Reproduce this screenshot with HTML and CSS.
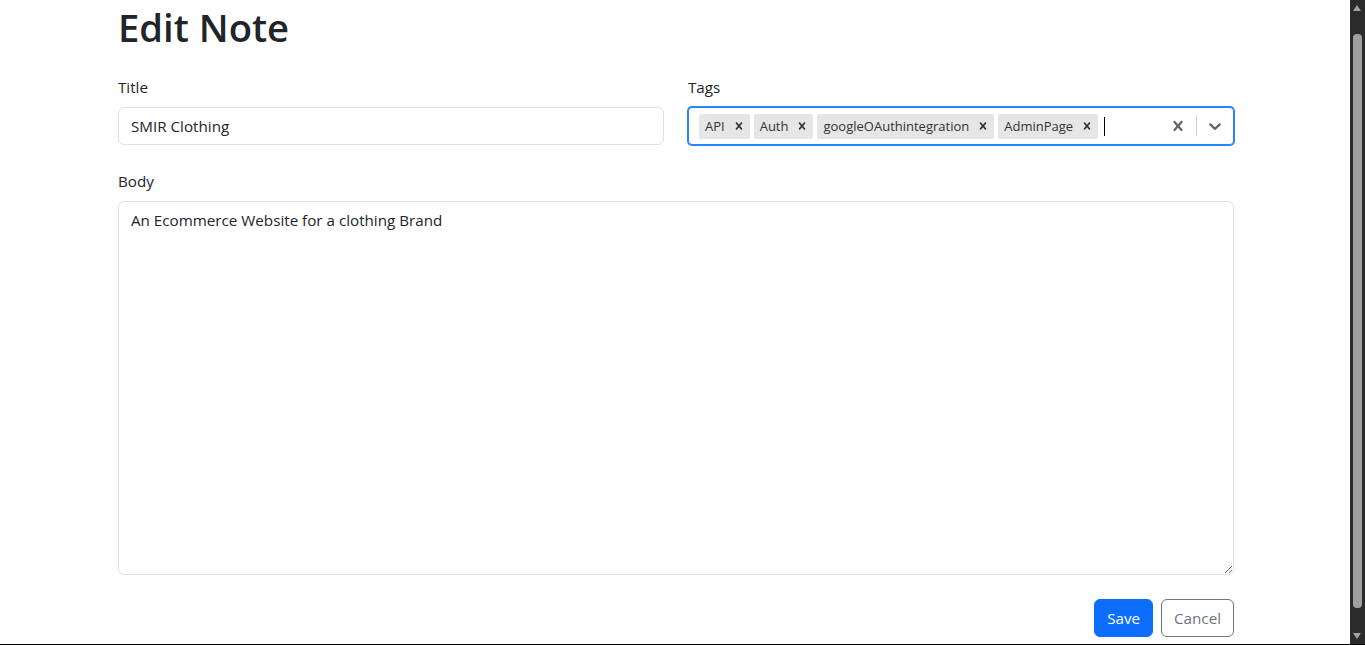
FILE: index.html
```html
<!DOCTYPE html>
<html lang="en">
<head>
<meta charset="utf-8">
<title>Edit Note</title>
<link rel="stylesheet" href="styles.css">
</head>
<body>
<div class="page">
  <div class="container">
    <h1 class="heading">Edit Note</h1>
    <form class="form">
      <div class="row">
        <div class="col">
          <label class="form-label">Title</label>
          <input class="form-control" type="text" value="SMIR Clothing">
        </div>
        <div class="col">
          <label class="form-label">Tags</label>
          <div class="select-control">
            <div class="value-container">
              <div class="chip"><span class="chip-label">API</span><span class="chip-remove"><svg viewBox="0 0 20 20" width="14" height="14"><path d="M14.348 14.849c-0.469 0.469-1.229 0.469-1.697 0l-2.651-3.030-2.651 3.029c-0.469 0.469-1.229 0.469-1.697 0-0.469-0.469-0.469-1.229 0-1.697l2.758-3.15-2.759-3.152c-0.469-0.469-0.469-1.228 0-1.697s1.228-0.469 1.697 0l2.652 3.031 2.651-3.031c0.469-0.469 1.228-0.469 1.697 0s0.469 1.229 0 1.697l-2.758 3.152 2.758 3.15c0.469 0.469 0.469 1.229 0 1.698z"/></svg></span></div>
              <div class="chip"><span class="chip-label">Auth</span><span class="chip-remove"><svg viewBox="0 0 20 20" width="14" height="14"><path d="M14.348 14.849c-0.469 0.469-1.229 0.469-1.697 0l-2.651-3.030-2.651 3.029c-0.469 0.469-1.229 0.469-1.697 0-0.469-0.469-0.469-1.229 0-1.697l2.758-3.15-2.759-3.152c-0.469-0.469-0.469-1.228 0-1.697s1.228-0.469 1.697 0l2.652 3.031 2.651-3.031c0.469-0.469 1.228-0.469 1.697 0s0.469 1.229 0 1.697l-2.758 3.152 2.758 3.15c0.469 0.469 0.469 1.229 0 1.698z"/></svg></span></div>
              <div class="chip"><span class="chip-label">googleOAuthintegration</span><span class="chip-remove"><svg viewBox="0 0 20 20" width="14" height="14"><path d="M14.348 14.849c-0.469 0.469-1.229 0.469-1.697 0l-2.651-3.030-2.651 3.029c-0.469 0.469-1.229 0.469-1.697 0-0.469-0.469-0.469-1.229 0-1.697l2.758-3.15-2.759-3.152c-0.469-0.469-0.469-1.228 0-1.697s1.228-0.469 1.697 0l2.652 3.031 2.651-3.031c0.469-0.469 1.228-0.469 1.697 0s0.469 1.229 0 1.697l-2.758 3.152 2.758 3.150c0.469 0.469 0.469 1.229 0 1.698z"/></svg></span></div>
              <div class="chip"><span class="chip-label">AdminPage</span><span class="chip-remove"><svg viewBox="0 0 20 20" width="14" height="14"><path d="M14.348 14.849c-0.469 0.469-1.229 0.469-1.697 0l-2.651-3.030-2.651 3.029c-0.469 0.469-1.229 0.469-1.697 0-0.469-0.469-0.469-1.229 0-1.697l2.758-3.15-2.759-3.152c-0.469-0.469-0.469-1.228 0-1.697s1.228-0.469 1.697 0l2.652 3.031 2.651-3.031c0.469-0.469 1.228-0.469 1.697 0s0.469 1.229 0 1.697l-2.758 3.152 2.758 3.15c0.469 0.469 0.469 1.229 0 1.698z"/></svg></span></div>
              <div class="caret"></div>
            </div>
            <div class="indicators">
              <div class="indicator"><svg viewBox="0 0 20 20" width="20" height="20"><path d="M14.348 14.849c-0.469 0.469-1.229 0.469-1.697 0l-2.651-3.030-2.651 3.029c-0.469 0.469-1.229 0.469-1.697 0-0.469-0.469-0.469-1.229 0-1.697l2.758-3.15-2.759-3.152c-0.469-0.469-0.469-1.228 0-1.697s1.228-0.469 1.697 0l2.652 3.031 2.651-3.031c0.469-0.469 1.228-0.469 1.697 0s0.469 1.229 0 1.697l-2.758 3.152 2.758 3.15c0.469 0.469 0.469 1.229 0 1.698z"/></svg></div>
              <span class="separator"></span>
              <div class="indicator"><svg viewBox="0 0 20 20" width="20" height="20"><path d="M4.516 7.548c0.436-0.446 1.043-0.481 1.576 0l3.908 3.747 3.908-3.747c0.533-0.481 1.141-0.446 1.574 0 0.436 0.445 0.408 1.197 0 1.615-0.406 0.418-4.695 4.502-4.695 4.502-0.217 0.223-0.502 0.335-0.787 0.335s-0.57-0.112-0.789-0.335c0 0-4.287-4.084-4.695-4.502s-0.436-1.17 0-1.615z"/></svg></div>
            </div>
          </div>
        </div>
      </div>
      <div class="field">
        <label class="form-label">Body</label>
        <textarea class="form-control textarea" rows="15">An Ecommerce Website for a clothing Brand</textarea>
      </div>
      <div class="actions">
        <button type="button" class="btn btn-primary">Save</button>
        <button type="button" class="btn btn-outline">Cancel</button>
      </div>
    </form>
  </div>
</div>
<div class="scrollbar">
  <div class="sb-arrow sb-up"></div>
  <div class="sb-thumb"></div>
  <div class="sb-arrow sb-down"></div>
</div>
<div class="bottom-line"></div>
</body>
</html>
```

FILE: styles.css
```css
* { box-sizing: border-box; }

html, body {
  margin: 0;
  padding: 0;
  background: #fff;
  overflow: hidden;
}

body {
  font-family: "Segoe UI", "Open Sans", "Noto Sans", sans-serif;
  font-size: 15.2px;
  line-height: 24px;
  color: #212529;
}

.page {
  margin-right: 15px;
  padding-left: 2px;
}

.container {
  width: 1116px;
  margin: 0 auto;
  padding-top: 3px;
}

.heading {
  margin: 0 0 24px 0;
  font-size: 38.2px;
  line-height: 48px;
  font-weight: 600;
}

.form {
  display: flex;
  flex-direction: column;
  gap: 24px;
}

.row {
  display: grid;
  grid-template-columns: 1fr 1fr;
  column-gap: 24px;
}

.col, .field {
  display: flex;
  flex-direction: column;
}

.form-label {
  display: block;
  margin-bottom: 8px;
  line-height: 24px;
}

.form-control {
  display: block;
  width: 100%;
  height: 38px;
  padding: 6px 12px;
  font-family: inherit;
  font-size: 15.2px;
  line-height: 24px;
  color: #212529;
  background: #fff;
  border: 1px solid #dee2e6;
  border-radius: 6px;
  outline: none;
}

.textarea {
  height: 374px;
  resize: vertical;
}

/* react-select like control */
.select-control {
  display: flex;
  align-items: center;
  min-height: 38px;
  border: 1px solid #2684ff;
  box-shadow: 0 0 0 1px #2684ff;
  border-radius: 4px;
  background: #fff;
}

.value-container {
  flex: 1;
  display: flex;
  flex-wrap: wrap;
  align-items: center;
  padding: 2px 8px;
  min-width: 0;
}

.chip {
  display: flex;
  margin: 2px;
  background: #e6e6e6;
  border-radius: 2px;
  color: #333;
}

.chip-label {
  font-size: 13px;
  line-height: 19px;
  padding: 3px 3px 3px 6px;
  white-space: nowrap;
}

.chip-remove {
  display: flex;
  align-items: center;
  padding: 0 4px;
  border-radius: 2px;
}

.chip-remove svg {
  fill: #333;
}

.caret {
  width: 1px;
  height: 19px;
  background: #000;
  margin-left: 4px;
}

.indicators {
  display: flex;
  align-items: stretch;
  align-self: stretch;
}

.indicator {
  display: flex;
  align-items: center;
  padding: 8px;
}

.indicator svg {
  fill: #666;
}

.separator {
  width: 1px;
  background: #ccc;
  margin: 8px 0;
}

.actions {
  display: flex;
  justify-content: flex-end;
  gap: 8px;
}

.btn {
  font-family: inherit;
  font-size: 15.2px;
  line-height: 24px;
  padding: 6px 12px;
  border-radius: 6px;
  border: 1px solid transparent;
  cursor: pointer;
}

.btn-primary {
  background: #0d6efd;
  border-color: #0d6efd;
  color: #fff;
}

.btn-outline {
  background: #fff;
  border-color: #6c757d;
  color: #6c757d;
}

/* window chrome overlays */
.scrollbar {
  position: fixed;
  top: 0;
  right: 0;
  width: 15px;
  height: 100%;
  background: #2b2b2b;
}

.sb-arrow {
  position: absolute;
  left: 3px;
  width: 0;
  height: 0;
  border-left: 4.5px solid transparent;
  border-right: 4.5px solid transparent;
}

.sb-up {
  top: 5px;
  border-bottom: 6px solid #a3a3a3;
}

.sb-down {
  bottom: 6px;
  border-top: 6px solid #a3a3a3;
}

.sb-thumb {
  position: absolute;
  left: 3px;
  width: 9px;
  top: 34px;
  height: 574px;
  background: #9f9f9f;
  border-radius: 4px;
}

.bottom-line {
  position: fixed;
  left: 0;
  right: 0;
  bottom: 0;
  height: 1px;
  background: #000;
}
```
